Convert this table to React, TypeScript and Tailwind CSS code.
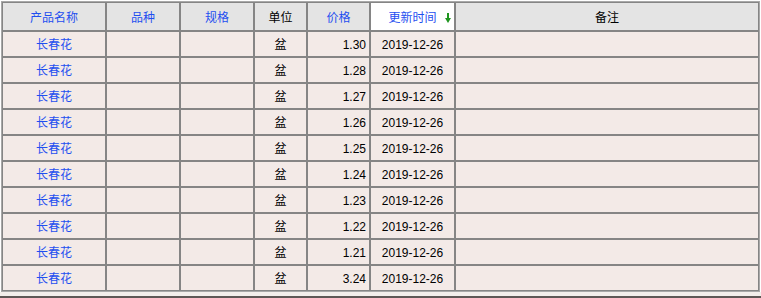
import React from "react";

const prices = ["1.30", "1.28", "1.27", "1.26", "1.25", "1.24", "1.23", "1.22", "1.21", "3.24"];

const cols = "grid grid-cols-[104px_74px_74px_53px_63px_85px_304px]";
const cell = "border border-[#858585] flex items-center pt-[2px]";
const blue = "text-[#1f4ff0]";

function ArrowDown() {
  return (
    <svg width="6" height="10" viewBox="0 0 6 10" className="absolute right-[3px] top-[10px]">
      <rect x="2" y="0" width="2" height="6" fill="#1f951f" />
      <path d="M0 5 L6 5 L3 10 Z" fill="#1f951f" />
    </svg>
  );
}

export default function App() {
  return (
    <div
      className="w-[761px] h-[298px] bg-white text-[12px] text-black"
      style={{ fontFamily: '"Liberation Sans", Arial, "Noto Sans CJK SC", sans-serif' }}
    >
      <div className="pt-px pl-px">
        <div className="w-[759px] border border-[#a8a8a8]">
          <div className={`${cols} h-[29px]`}>
            <div className={`${cell} justify-center bg-[#e4e4e4] ${blue}`}>产品名称</div>
            <div className={`${cell} justify-center bg-[#e4e4e4] ${blue}`}>品种</div>
            <div className={`${cell} justify-center bg-[#e4e4e4] ${blue}`}>规格</div>
            <div className={`${cell} justify-center bg-[#e4e4e4]`}>单位</div>
            <div className={`${cell} justify-center bg-[#e4e4e4] ${blue}`}>价格</div>
            <div className={`${cell} justify-center bg-white ${blue} relative`}>
              更新时间
              <ArrowDown />
            </div>
            <div className={`${cell} justify-center bg-[#e4e4e4]`}>备注</div>
          </div>
          {prices.map((p, i) => (
            <div key={i} className={`${cols} h-[26px] bg-[#f3eae7]`}>
              <div className={`${cell} justify-center ${blue}`}>长春花</div>
              <div className={cell}></div>
              <div className={cell}></div>
              <div className={`${cell} justify-center`}>盆</div>
              <div className={`${cell} justify-end pr-[3px]`}>{p}</div>
              <div className={`${cell} justify-center`}>2019-12-26</div>
              <div className={cell}></div>
            </div>
          ))}
        </div>
      </div>
      <div className="h-[4px] bg-[#f3eeeb]"></div>
      <div className="h-[2px] bg-[#5e5755]"></div>
    </div>
  );
}
